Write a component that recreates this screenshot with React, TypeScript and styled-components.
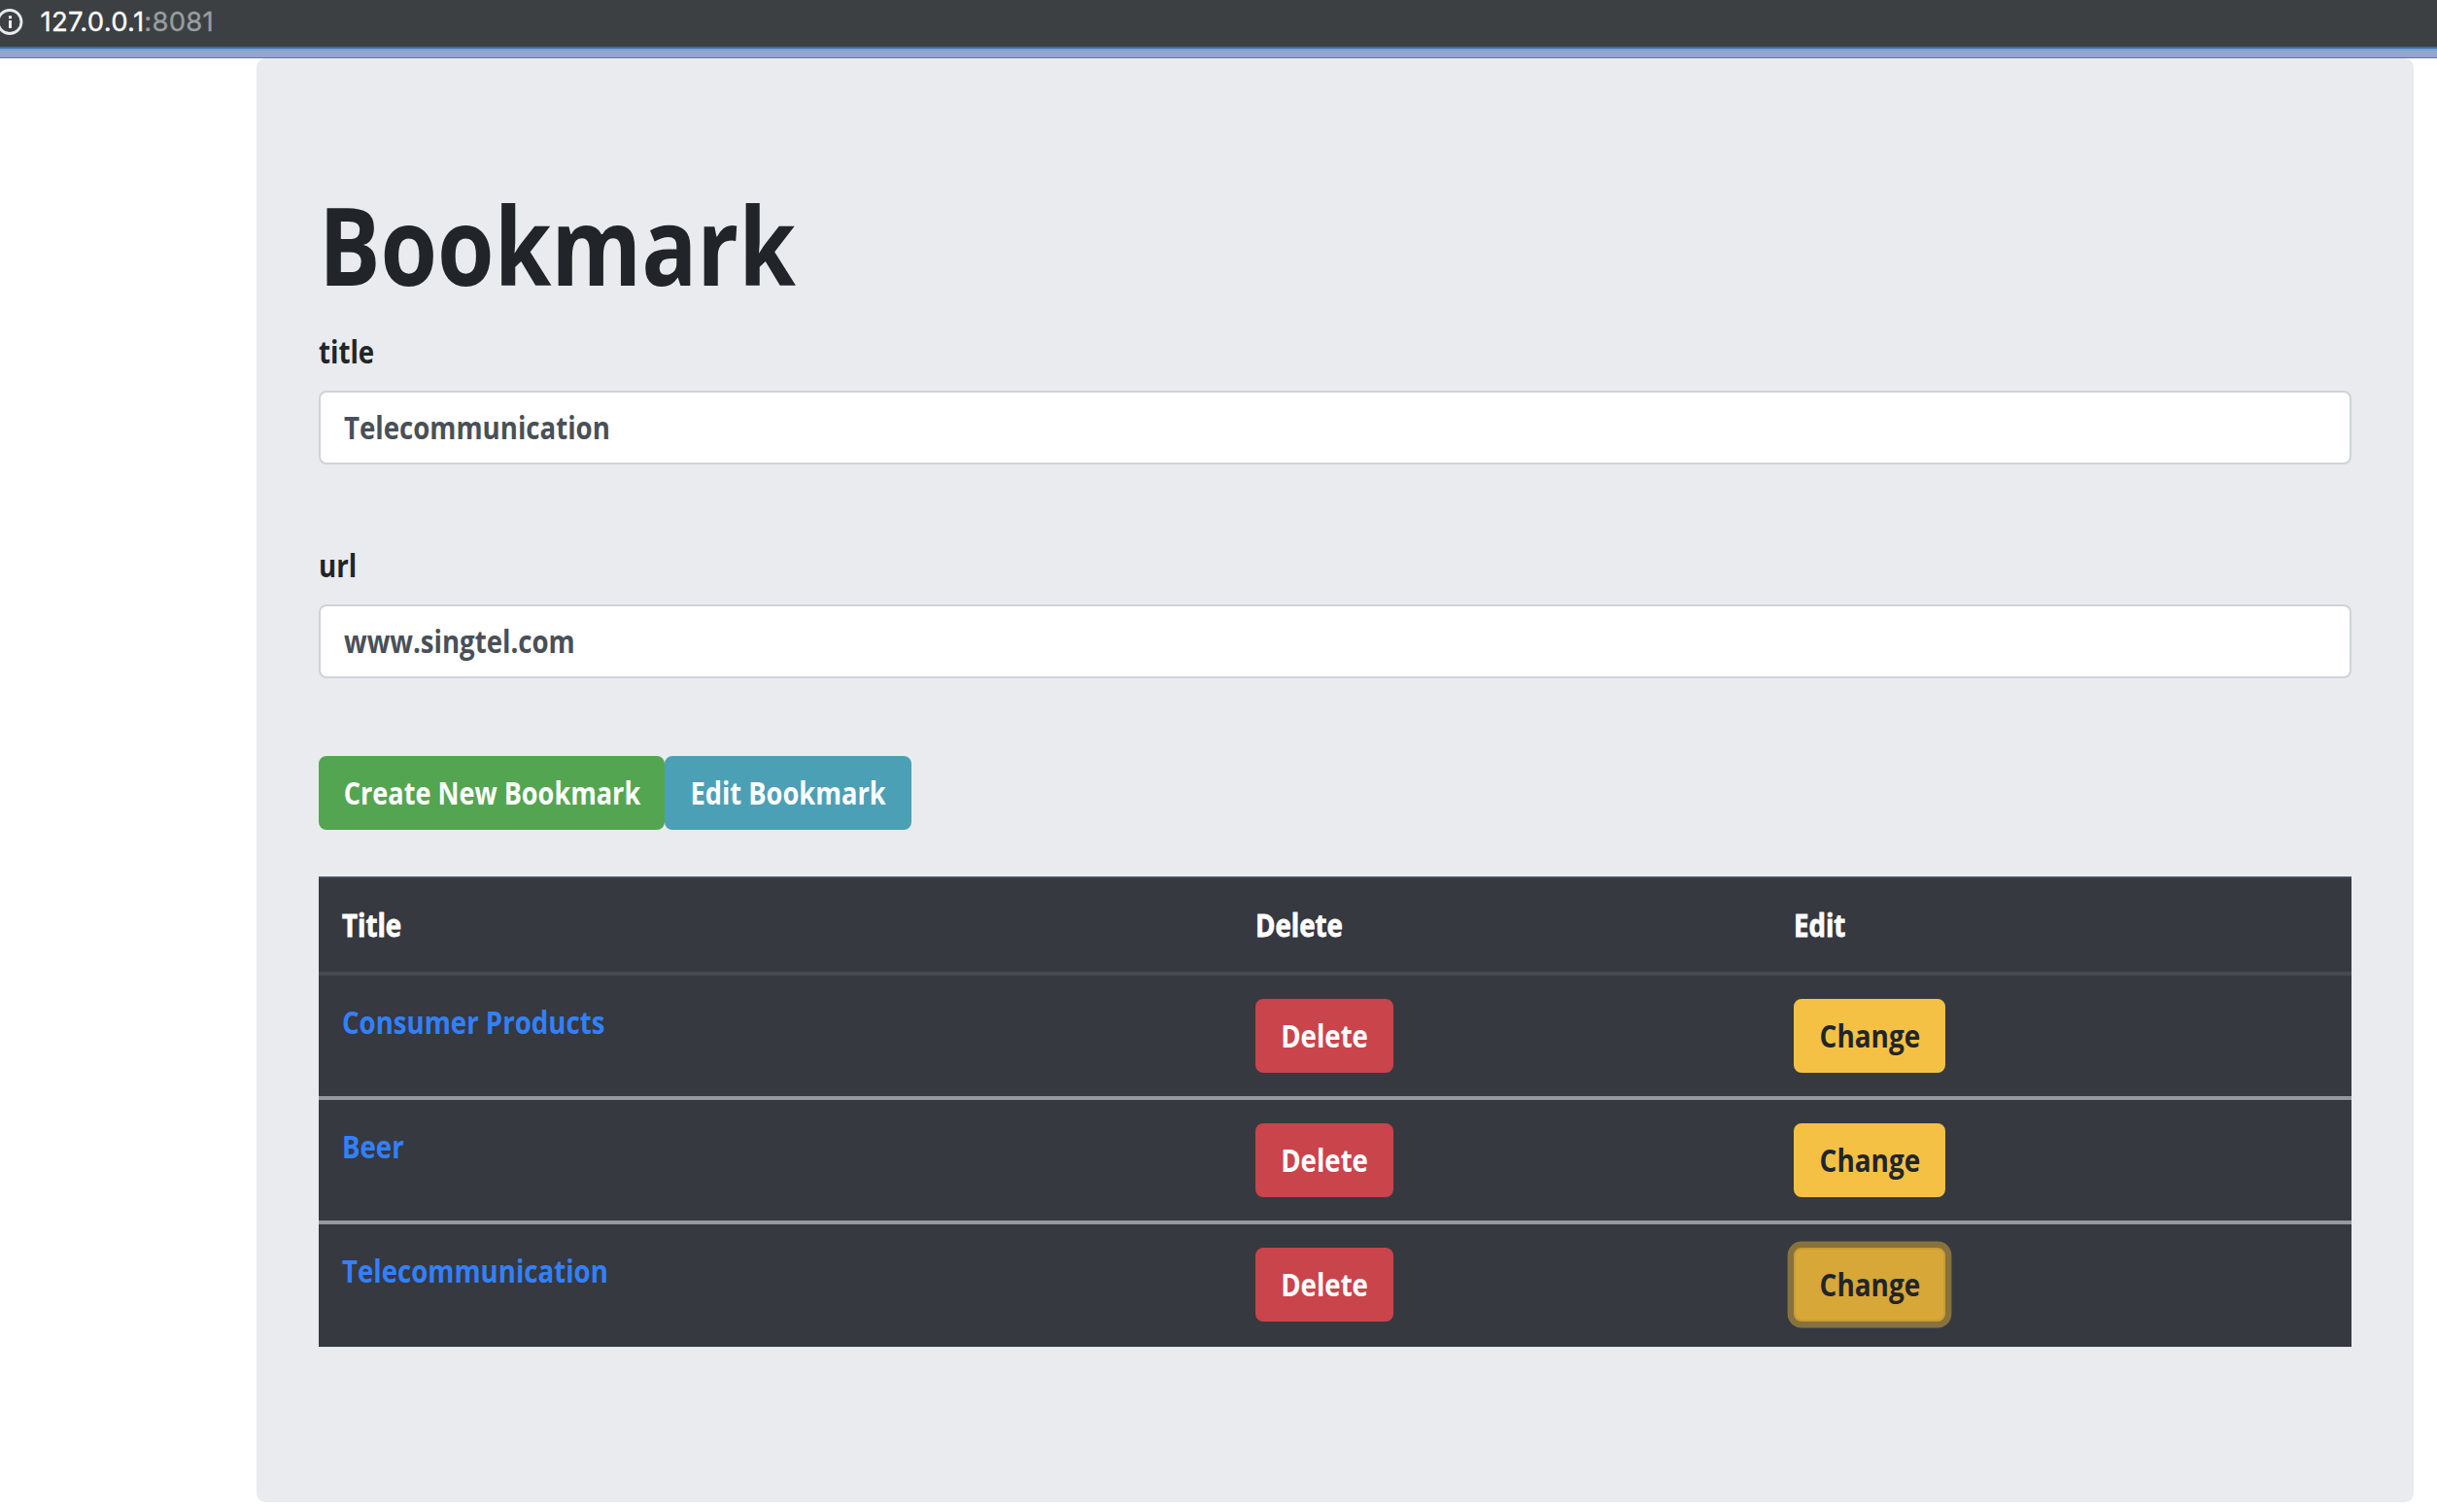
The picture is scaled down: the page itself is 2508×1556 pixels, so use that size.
import React from "react";
import styled, { createGlobalStyle } from "styled-components";

const GlobalStyle = createGlobalStyle`
  * { box-sizing: border-box; }
  body {
    margin: 0;
    background: #fff;
    color: #212529;
    font-family: "Open Sans", "Noto Sans", sans-serif;
    font-size: 32px;
    font-weight: 700;
    line-height: 48px;
  }
`;

const Narrow = styled.span<{ $scale?: number; $centered?: boolean }>`
  display: inline-block;
  white-space: nowrap;
  transform: scaleX(${(p) => p.$scale ?? 0.863});
  transform-origin: ${(p) => (p.$centered ? "center" : "left center")};
`;

const AddressBar = styled.header`
  display: flex;
  align-items: center;
  height: 48px;
  padding-bottom: 4px;
  background: #3c4043;
`;

const InfoIcon = styled.svg`
  width: 28px;
  height: 28px;
  margin-left: -4px;
  flex: none;
`;

const Address = styled.div`
  margin-left: 17.5px;
  font: 400 27.5px/44px Inter, Roboto, sans-serif;
  letter-spacing: 0.25px;
  -webkit-text-stroke: 0.3px currentColor;
  color: #fff;
`;

const Port = styled.span`
  color: #9a9da0;
`;

const AccentStrip = styled.div`
  height: 12px;
  border-top: 2px solid #426e96;
  border-bottom: 1px solid #63759d;
  background: linear-gradient(#72a2da 0 2px, #94a6cf 2px);
`;

const Jumbotron = styled.main`
  width: 2220px;
  height: 1486px;
  margin-left: 264px;
  padding: 128px 64px;
  border-radius: 9.6px;
  background: #eaebef;
`;

const Heading = styled.h1`
  margin: 0 0 24px;
  font-size: 110.5px;
  font-weight: 700;
  line-height: 126px;
`;

const Field = styled.div`
  margin-bottom: 80px;
`;

const Label = styled.div`
  margin-bottom: 16px;
`;

const TextField = styled.div`
  height: 76px;
  padding: 12px 24px;
  border: 2px solid #ced3da;
  border-radius: 8px;
  background: #fff;
  color: #495057;
`;

const Actions = styled.div`
  display: flex;
  margin-bottom: 48px;
`;

type Tone = "success" | "info" | "danger" | "warning";

const tones: Record<Tone, { bg: string; fg: string }> = {
  success: { bg: "#54a551", fg: "#fff" },
  info: { bg: "#4ba0b6", fg: "#fff" },
  danger: { bg: "#ca444b", fg: "#fff" },
  warning: { bg: "#f5c145", fg: "#212529" },
};

const Button = styled.button<{ $tone: Tone; $width: number; $pressed?: boolean }>`
  display: flex;
  align-items: center;
  justify-content: center;
  width: ${(p) => p.$width}px;
  height: 76px;
  padding: 0;
  border: 2px solid ${(p) => (p.$pressed ? "#cb9d34" : tones[p.$tone].bg)};
  border-radius: 8px;
  background: ${(p) => (p.$pressed ? "#d7a738" : tones[p.$tone].bg)};
  box-shadow: ${(p) => (p.$pressed ? "0 0 0 6.4px #87723e" : "none")};
  color: ${(p) => tones[p.$tone].fg};
  font: inherit;
`;

const Table = styled.div`
  border-top: 2px solid #454d55;
  background: #363940;
`;

const Row = styled.div<{ $head?: boolean; $divided?: boolean }>`
  display: grid;
  grid-template-columns: 940px 554px 598px;
  border-top: ${(p) => (p.$divided ? "4px solid #95999b" : "0")};
  border-bottom: ${(p) => (p.$head ? "4px solid #454a53" : "0")};
  color: #fff;
  -webkit-text-stroke: ${(p) => (p.$head ? "0.8px #fff" : "0")};

  &:last-child {
    padding-bottom: 2px;
  }
`;

const Cell = styled.div`
  padding: 24px;
`;

const Link = styled.a`
  color: #3380fc;
  text-decoration: none;
`;

const bookmarks = ["Consumer Products", "Beer", "Telecommunication"];

export default function App() {
  return (
    <>
      <GlobalStyle />
      <AddressBar>
        <InfoIcon viewBox="0 0 28 28" fill="none">
          <circle cx="14" cy="14.5" r="12" stroke="#e9eaee" strokeWidth="2.8" />
          <path d="M13 8.2h3v3h-3zM13 13h3v8h-3z" fill="#f1f2f4" />
        </InfoIcon>
        <Address>
          127.0.0.1<Port>:8081</Port>
        </Address>
      </AddressBar>
      <AccentStrip />
      <Jumbotron>
        <Heading>
          <Narrow $scale={0.856}>Bookmark</Narrow>
        </Heading>
        <Field>
          <Label>
            <Narrow>title</Narrow>
          </Label>
          <TextField>
            <Narrow>Telecommunication</Narrow>
          </TextField>
        </Field>
        <Field>
          <Label>
            <Narrow>url</Narrow>
          </Label>
          <TextField>
            <Narrow>www.singtel.com</Narrow>
          </TextField>
        </Field>
        <Actions>
          <Button $tone="success" $width={356}>
            <Narrow $centered $scale={0.846}>Create New Bookmark</Narrow>
          </Button>
          <Button $tone="info" $width={254}>
            <Narrow $centered $scale={0.852}>Edit Bookmark</Narrow>
          </Button>
        </Actions>
        <Table>
          <Row $head>
            <Cell>
              <Narrow>Title</Narrow>
            </Cell>
            <Cell>
              <Narrow>Delete</Narrow>
            </Cell>
            <Cell>
              <Narrow>Edit</Narrow>
            </Cell>
          </Row>
          {bookmarks.map((name, i) => (
            <Row key={name} $divided={i > 0}>
              <Cell>
                <Link>
                  <Narrow>{name}</Narrow>
                </Link>
              </Cell>
              <Cell>
                <Button $tone="danger" $width={142}>
                  <Narrow $centered>Delete</Narrow>
                </Button>
              </Cell>
              <Cell>
                <Button $tone="warning" $width={156} $pressed={i === 2}>
                  <Narrow $centered $scale={0.872}>Change</Narrow>
                </Button>
              </Cell>
            </Row>
          ))}
        </Table>
      </Jumbotron>
    </>
  );
}
